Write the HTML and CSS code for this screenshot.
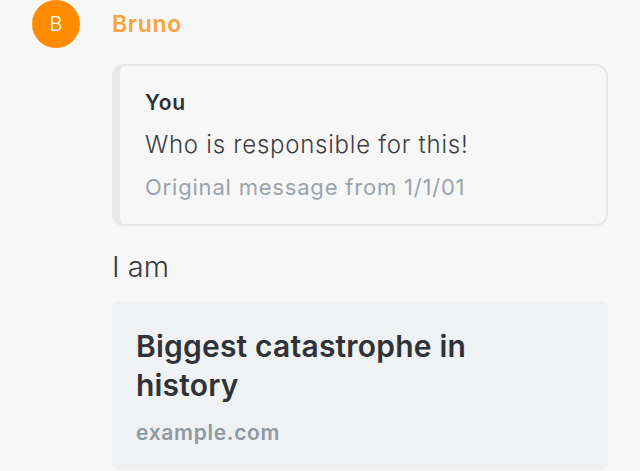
FILE: index.html
```html
<!DOCTYPE html>
<html>
<head>
<meta charset="utf-8">
<link rel="stylesheet" href="styles.css">
</head>
<body>
<div class="message">
  <div class="avatar">B</div>
  <div class="content">
    <div class="author">Bruno</div>
    <div class="quote">
      <div class="quote-author">You</div>
      <div class="quote-text">Who is responsible for this!</div>
      <div class="quote-meta">Original message from 1/1/01</div>
    </div>
    <div class="text">I am</div>
    <div class="link-card">
      <div class="link-title">Biggest catastrophe in history</div>
      <div class="link-host">example.com</div>
    </div>
  </div>
</div>
</body>
</html>
```
FILE: styles.css
```css
html, body {
  margin: 0;
  padding: 0;
  background: #f7f7f7;
  font-family: Inter, "Noto Sans", sans-serif;
  overflow: hidden;
}

.message {
  display: flex;
  gap: 32px;
  padding: 0 32px;
}

.avatar {
  flex: 0 0 48px;
  width: 48px;
  height: 48px;
  border-radius: 50%;
  background: #ff8c00;
  color: #fff;
  font-size: 20px;
  font-weight: 300;
  line-height: 48px;
  text-align: center;
}

.content {
  flex: 1;
  min-width: 0;
}

.author {
  color: #f9a43c;
  font-size: 23px;
  font-weight: 600;
  letter-spacing: 0.7px;
  line-height: 48px;
  margin-bottom: 16px;
}

.quote {
  border: 2px solid #e8e8e8;
  border-left-width: 8px;
  border-radius: 12px;
  padding: 16px 24px 15px 25px;
}

.quote-author {
  color: #2d3035;
  font-size: 21px;
  font-weight: 600;
  letter-spacing: 0.8px;
  line-height: 41px;
}

.quote-text {
  color: #3a3d41;
  font-size: 24px;
  font-weight: 350;
  letter-spacing: 0.75px;
  line-height: 43px;
}

.quote-meta {
  color: #9aa3ab;
  font-size: 22px;
  letter-spacing: 0.8px;
  line-height: 43px;
}

.text {
  margin-top: 21px;
  color: #35383c;
  font-size: 29px;
  font-weight: 300;
  line-height: 40px;
  margin-bottom: 14px;
}

.link-card {
  background: #f0f1f3;
  border-radius: 8px;
  padding: 26px 24px 25px 24px;
}

.link-title {
  max-width: 380px;
  color: #2f3337;
  font-size: 30px;
  font-weight: 600;
  letter-spacing: 0.2px;
  line-height: 39px;
  margin-bottom: 16px;
}

.link-host {
  color: #8e98a1;
  font-size: 21px;
  font-weight: 600;
  letter-spacing: 0.7px;
  line-height: 24px;
}
```
